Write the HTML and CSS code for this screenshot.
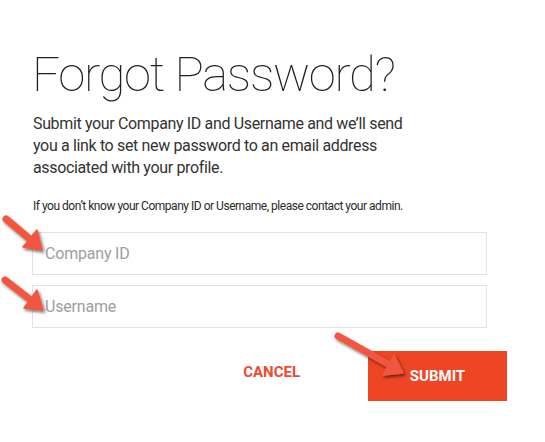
FILE: index.html
```html
<!DOCTYPE html>
<html>
<head>
<meta charset="utf-8">
<link rel="stylesheet" href="styles.css">
</head>
<body>
<div class="page">
  <h1 class="title">Forgot Password?</h1>
  <p class="lead">Submit your Company ID and Username and we’ll send you a link to set new password to an email address associated with your profile.</p>
  <p class="note">If you don’t know your Company ID or Username, please contact your admin.</p>
  <form class="form">
    <input class="field" type="text" placeholder="Company ID">
    <input class="field" type="text" placeholder="Username">
    <div class="actions">
      <button type="button" class="btn-cancel">CANCEL</button>
      <button type="button" class="btn-submit">SUBMIT</button>
    </div>
  </form>
</div>
<svg class="arrows" width="545" height="442" viewBox="0 0 545 442">
  <defs>
    <filter id="sh" x="-30%" y="-30%" width="160%" height="160%">
      <feDropShadow dx="1.5" dy="2" stdDeviation="1.6" flood-color="#000" flood-opacity="0.55"/>
    </filter>
  </defs>
  <g fill="#f2553f" stroke="#f2553f" filter="url(#sh)">
    <line x1="6" y1="219" x2="31" y2="240" stroke-width="7" stroke-linecap="round"/>
    <polygon points="42,250 23,247 37,230" stroke-width="1.5" stroke-linejoin="round"/>
    <line x1="5" y1="280" x2="32" y2="301" stroke-width="7" stroke-linecap="round"/>
    <polygon points="43,310 24,308 37,290" stroke-width="1.5" stroke-linejoin="round"/>
    <line x1="338" y1="336" x2="388" y2="364" stroke-width="7" stroke-linecap="round"/>
    <polygon points="403,373 383,375 394,355" stroke-width="1.5" stroke-linejoin="round"/>
  </g>
</svg>
</body>
</html>
```
FILE: styles.css
```css
html, body {
  margin: 0;
  padding: 0;
  background: #ffffff;
}
body {
  font-family: Roboto, "Liberation Sans", Arial, sans-serif;
  width: 545px;
  height: 442px;
  position: relative;
  overflow: hidden;
}
.page {
  padding: 46px 0 0 32px;
  width: 475px;
}
.title {
  margin: 0;
  font-size: 49px;
  font-weight: 100;
  line-height: 58px;
  color: #1f1f1f;
  letter-spacing: -1.3px;
}
.lead {
  margin: 9px 0 0 1px;
  width: 380px;
  font-size: 16px;
  line-height: 22px;
  color: #333;
  letter-spacing: -0.35px;
}
.note {
  margin: 19px 0 0 1px;
  font-size: 12px;
  line-height: 16px;
  color: #2a2a2a;
  letter-spacing: -0.48px;
}
.form {
  margin-top: 18px;
  display: flex;
  flex-direction: column;
  gap: 10px;
}
.field {
  box-sizing: border-box;
  width: 455px;
  height: 43px;
  margin: 0;
  border: 1px solid #e2e2e2;
  padding: 0 12px;
  font-family: Roboto, "Liberation Sans", Arial, sans-serif;
  font-size: 16px;
  letter-spacing: -0.2px;
  color: #333;
  outline: none;
  background: #fff;
}
.field::placeholder {
  color: #9e9e9e;
}
.actions {
  margin-top: 13px;
  display: flex;
  justify-content: flex-end;
  align-items: center;
  gap: 68px;
}
.btn-cancel {
  border: 0;
  background: none;
  padding: 0;
  margin: 0 0 8px 0;
  font-family: Roboto, "Liberation Sans", Arial, sans-serif;
  font-size: 15px;
  font-weight: 700;
  color: #ef4a2e;
}
.btn-submit {
  border: 0;
  width: 139px;
  height: 50px;
  padding: 0;
  background: #ee4524;
  color: #fff;
  font-family: Roboto, "Liberation Sans", Arial, sans-serif;
  font-size: 15px;
  font-weight: 700;
}
.arrows {
  position: absolute;
  left: 0;
  top: 0;
  pointer-events: none;
}
```
